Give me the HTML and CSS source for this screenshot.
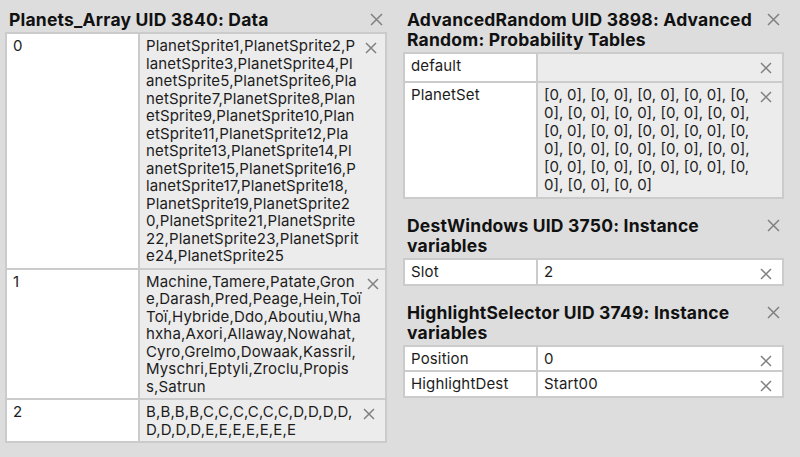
FILE: index.html
```html
<!DOCTYPE html>
<html lang="en">
<head>
  <meta charset="UTF-8" />
  <meta name="viewport" content="width=device-width, initial-scale=1.0" />
  <title>Object Inspector</title>

  <link rel="stylesheet" href="styles.css">
</head>
<body>

  <div class="columns">

    <div class="column">
      <div class="panel">
        <div class="panel-head">
          <h2>Planets_Array UID 3840: Data</h2>
          <button class="close"><svg viewBox="0 0 13 13"><path d="M1 1L12 12M12 1L1 12"/></svg></button>
        </div>
        <table class="vars">
          <colgroup><col class="key-col"><col></colgroup>
          <tr>
            <td class="key">0</td>
            <td class="val">
              <div class="cell">
                <span class="text">PlanetSprite1,PlanetSprite2,P<br>lanetSprite3,PlanetSprite4,Pl<br>anetSprite5,PlanetSprite6,Pla<br>netSprite7,PlanetSprite8,Plan<br>etSprite9,PlanetSprite10,Plan<br>etSprite11,PlanetSprite12,Pla<br>netSprite13,PlanetSprite14,Pl<br>anetSprite15,PlanetSprite16,P<br>lanetSprite17,PlanetSprite18,<br>PlanetSprite19,PlanetSprite2<br>0,PlanetSprite21,PlanetSprite<br>22,PlanetSprite23,PlanetSprit<br>e24,PlanetSprite25</span>
                <button class="close small"><svg viewBox="0 0 12 12"><path d="M1 1L11 11M11 1L1 11"/></svg></button>
              </div>
            </td>
          </tr>
          <tr>
            <td class="key">1</td>
            <td class="val">
              <div class="cell">
                <span class="text">Machine,Tamere,Patate,Gron<br>e,Darash,Pred,Peage,Hein,Toï<br>Toï,Hybride,Ddo,Aboutiu,Wha<br>hxha,Axori,Allaway,Nowahat,<br>Cyro,Grelmo,Dowaak,Kassril,<br>Myschri,Eptyli,Zroclu,Propis<br>s,Satrun</span>
                <button class="close small"><svg viewBox="0 0 12 12"><path d="M1 1L11 11M11 1L1 11"/></svg></button>
              </div>
            </td>
          </tr>
          <tr>
            <td class="key">2</td>
            <td class="val">
              <div class="cell">
                <span class="text">B,B,B,B,C,C,C,C,C,C,D,D,D,D,<br>D,D,D,D,E,E,E,E,E,E,E</span>
                <button class="close small"><svg viewBox="0 0 12 12"><path d="M1 1L11 11M11 1L1 11"/></svg></button>
              </div>
            </td>
          </tr>
        </table>
      </div>
    </div>

    <div class="column">
      <div class="panel">
        <div class="panel-head">
          <h2>AdvancedRandom UID 3898: Advanced Random: Probability Tables</h2>
          <button class="close"><svg viewBox="0 0 13 13"><path d="M1 1L12 12M12 1L1 12"/></svg></button>
        </div>
        <table class="vars">
          <colgroup><col class="key-col"><col></colgroup>
          <tr>
            <td class="key">default</td>
            <td class="val">
              <div class="cell empty">
                <span class="text"></span>
                <button class="close small"><svg viewBox="0 0 12 12"><path d="M1 1L11 11M11 1L1 11"/></svg></button>
              </div>
            </td>
          </tr>
          <tr>
            <td class="key">PlanetSet</td>
            <td class="val">
              <div class="cell">
                <span class="text tight">[0, 0], [0, 0], [0, 0], [0, 0], [0,<br>0], [0, 0], [0, 0], [0, 0], [0, 0],<br>[0, 0], [0, 0], [0, 0], [0, 0], [0,<br>0], [0, 0], [0, 0], [0, 0], [0, 0],<br>[0, 0], [0, 0], [0, 0], [0, 0], [0,<br>0], [0, 0], [0, 0]</span>
                <button class="close small"><svg viewBox="0 0 12 12"><path d="M1 1L11 11M11 1L1 11"/></svg></button>
              </div>
            </td>
          </tr>
        </table>
      </div>

      <div class="panel">
        <div class="panel-head">
          <h2>DestWindows UID 3750: Instance variables</h2>
          <button class="close"><svg viewBox="0 0 13 13"><path d="M1 1L12 12M12 1L1 12"/></svg></button>
        </div>
        <table class="vars">
          <colgroup><col class="key-col"><col></colgroup>
          <tr>
            <td class="key">Slot</td>
            <td class="val plain">
              <div class="cell">
                <span class="text">2</span>
                <button class="close small"><svg viewBox="0 0 12 12"><path d="M1 1L11 11M11 1L1 11"/></svg></button>
              </div>
            </td>
          </tr>
        </table>
      </div>

      <div class="panel">
        <div class="panel-head">
          <h2>HighlightSelector UID 3749: Instance variables</h2>
          <button class="close"><svg viewBox="0 0 13 13"><path d="M1 1L12 12M12 1L1 12"/></svg></button>
        </div>
        <table class="vars">
          <colgroup><col class="key-col"><col></colgroup>
          <tr>
            <td class="key">Position</td>
            <td class="val plain">
              <div class="cell">
                <span class="text">0</span>
                <button class="close small"><svg viewBox="0 0 12 12"><path d="M1 1L11 11M11 1L1 11"/></svg></button>
              </div>
            </td>
          </tr>
          <tr>
            <td class="key">HighlightDest</td>
            <td class="val plain">
              <div class="cell">
                <span class="text">Start00</span>
                <button class="close small"><svg viewBox="0 0 12 12"><path d="M1 1L11 11M11 1L1 11"/></svg></button>
              </div>
            </td>
          </tr>
        </table>
      </div>
    </div>

  </div>

</body>
</html>
```

FILE: styles.css
```css
* {
  margin: 0;
  padding: 0;
  box-sizing: border-box;
  font-family: Inter, "Noto Sans", sans-serif;
}

body {
  background: #dddddd;
  color: #1c1c1c;
  font-size: 15px;
  letter-spacing: 0.15px;
}

.columns {
  display: grid;
  grid-template-columns: 382px 381px;
  gap: 16px;
  padding: 10px 0 0 5px;
  align-items: start;
}

.panel + .panel {
  margin-top: 17px;
}

.panel-head {
  display: flex;
  align-items: flex-start;
  padding: 0 4px 2px 4px;
  gap: 10px;
}

.panel-head h2 {
  flex: 1;
  font-size: 17.5px;
  font-weight: 700;
  line-height: 20px;
  letter-spacing: 0.2px;
  color: #111;
}

.close {
  background: none;
  border: none;
  cursor: pointer;
  display: flex;
  flex-shrink: 0;
}

.close svg {
  width: 13px;
  height: 13px;
  fill: none;
  stroke: #808080;
  stroke-width: 1.5;
}

.panel-head .close {
  margin-top: 3px;
}

.close.small {
  margin-top: 5px;
  margin-right: 4px;
}

.close.small svg {
  width: 12px;
  height: 12px;
}

.vars {
  width: 100%;
  border-collapse: collapse;
  table-layout: fixed;
  border: 2px solid #cbcbcb;
}

.key-col {
  width: 133px;
}

.vars td {
  border: 2px solid #cbcbcb;
  padding: 3px 6px 3px 6px;
  vertical-align: top;
  line-height: 17.5px;
}

.key {
  background: white;
}

.val {
  background: #ececec;
}

.val.plain {
  background: white;
}

.cell {
  display: flex;
  align-items: flex-start;
  gap: 6px;
}

.cell.empty {
  min-height: 21px;
}

.text {
  flex: 1;
  white-space: nowrap;
}

.text.tight {
  line-height: 18px;
  letter-spacing: 0;
}
```
